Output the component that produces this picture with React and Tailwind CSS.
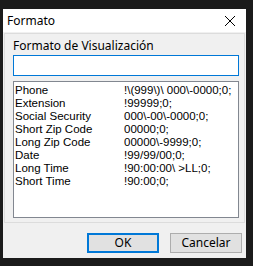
const rows = [
  ['Phone', '!\\(999\\)\\ 000\\-0000;0;'],
  ['Extension', '!99999;0;'],
  ['Social Security', '000\\-00\\-0000;0;'],
  ['Short Zip Code', '00000;0;'],
  ['Long Zip Code', '00000\\-9999;0;'],
  ['Date', '!99/99/00;0;'],
  ['Long Time', '!90:00:00\\ >LL;0;'],
  ['Short Time', '!90:00;0;'],
];

export default function App() {
  return (
    <div className="w-[253px] h-[266px] bg-[#1b1b1b] pl-[3px] pt-[9px] overflow-hidden">
      <div className="w-[243px] h-[249px] flex flex-col bg-[#f0f0f0] font-['Noto_Sans',sans-serif] text-black">
        {/* Title bar */}
        <div className="h-[23px] bg-white flex items-center justify-between pl-[4px] pr-[10px]">
          <span className="text-[12px] leading-none">Formato</span>
          <svg width="12" height="12" viewBox="0 0 12 12" className="text-black">
            <path d="M1 1L11 11M11 1L1 11" stroke="currentColor" strokeWidth="1" fill="none" />
          </svg>
        </div>

        {/* Group box */}
        <div className="ml-[1px] mt-[1px] w-[241px] h-[190px] border border-[#dcdcdc] flex flex-col px-[8px]">
          <div className="text-[12px] leading-none mt-[6px] h-[14px]">Formato de Visualización</div>
          <div className="mt-[1px] h-[21px] w-[226px] border border-[#0078d7] bg-white" />
          <div className="mt-[5px] h-[137px] w-[226px] border border-[#828790] bg-white pt-[2px] font-['Liberation_Sans',sans-serif] text-[11.5px]">
            {rows.map(([name, mask]) => (
              <div key={name} className="flex h-[13px] items-center leading-none">
                <span className="w-[110px] pl-[1px]">{name}</span>
                <span>{mask}</span>
              </div>
            ))}
          </div>
        </div>

        {/* Buttons */}
        <div className="flex gap-[11px] ml-[84px] mt-[10px]">
          <button className="w-[72px] h-[20px] border-2 border-[#0078d7] bg-[#e1e1e1] text-[12px] leading-none flex items-center justify-center">
            OK
          </button>
          <button className="w-[72px] h-[20px] border border-[#adadad] bg-[#e1e1e1] text-[12px] leading-none flex items-center justify-center">
            Cancelar
          </button>
        </div>
      </div>
    </div>
  );
}
